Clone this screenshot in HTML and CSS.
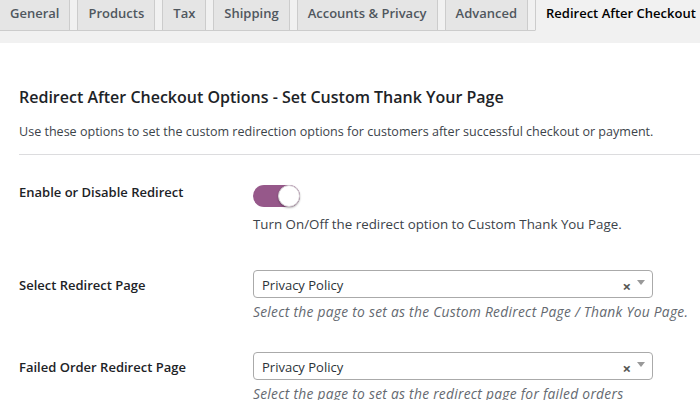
FILE: index.html
```html
<!DOCTYPE html>
<html lang="en">
<head>
<meta charset="utf-8">
<title>Redirect After Checkout</title>
<link rel="stylesheet" href="styles.css">
</head>
<body>
<div class="top">
  <nav class="tabs">
    <a class="tab">General</a>
    <a class="tab">Products</a>
    <a class="tab">Tax</a>
    <a class="tab">Shipping</a>
    <a class="tab">Accounts &amp; Privacy</a>
    <a class="tab">Advanced</a>
    <a class="tab active">Redirect After Checkout</a>
  </nav>
</div>
<main class="content">
  <h2 class="title">Redirect After Checkout Options - Set Custom Thank Your Page</h2>
  <p class="intro">Use these options to set the custom redirection options for customers after successful checkout or payment.</p>
  <hr class="sep">
  <div class="row row-toggle">
    <div class="label">Enable or Disable Redirect</div>
    <div class="field">
      <span class="toggle"><span class="knob"></span></span>
      <p class="plain-desc">Turn On/Off the redirect option to Custom Thank You Page.</p>
    </div>
  </div>
  <div class="row row-select">
    <div class="label">Select Redirect Page</div>
    <div class="field">
      <div class="select"><span class="value">Privacy Policy</span><span class="clear">×</span><span class="arrow"></span></div>
      <p class="desc">Select the page to set as the Custom Redirect Page / Thank You Page.</p>
    </div>
  </div>
  <div class="row row-select row-last">
    <div class="label">Failed Order Redirect Page</div>
    <div class="field">
      <div class="select"><span class="value">Privacy Policy</span><span class="clear">×</span><span class="arrow"></span></div>
      <p class="desc">Select the page to set as the redirect page for failed orders</p>
    </div>
  </div>
</main>
</body>
</html>
```
FILE: styles.css
```css
* { box-sizing: border-box; }
html, body { margin: 0; padding: 0; }
body {
  background: #fff;
  font-family: "Open Sans", "Noto Sans", sans-serif;
  color: #3c434a;
  width: 700px;
  height: 400px;
  overflow: hidden;
}
.top {
  background: #f1f1f1;
  height: 43px;
}
.tabs {
  display: flex;
  gap: 7px;
  height: 31px;
  border-bottom: 1px solid #cccccc;
  white-space: nowrap;
}
.tab {
  display: block;
  height: 31px;
  padding: 1px 10px 0;
  margin-bottom: -1px;
  background: #e5e5e5;
  border: 1px solid #cccccc;
  border-top: none;
  color: #50575e;
  font-size: 13px;
  font-weight: 600;
  line-height: 24px;
}
.tab:first-child { margin-left: -1px; }
.tab.active {
  background: #f1f1f1;
  border-bottom-color: #f1f1f1;
  color: #000;
}
.content {
  padding-left: 19px;
}
.title {
  margin: 43px 0 0;
  font-size: 16px;
  line-height: 22px;
  font-weight: 600;
  color: #1d2327;
}
.intro {
  margin: 15px 0 0;
  font-size: 12.55px;
  line-height: 18px;
}
.sep {
  margin: 13px 0 0;
  border: 0;
  border-top: 1px solid #dcdcde;
  height: 0;
}
.row {
  display: grid;
  grid-template-columns: 234px 1fr;
}
.row-toggle { margin-top: 28px; }
.row-select { margin-top: 37px; }
.row-last { margin-top: 31px; }
.label {
  font-size: 13px;
  line-height: 18px;
  font-weight: 600;
  color: #1d2327;
}
.row-select .label { padding-top: 6px; }
.row-toggle .field { padding-top: 2px; }
.toggle {
  display: block;
  position: relative;
  width: 47px;
  height: 22px;
  border-radius: 11px;
  background: #96588a;
}
.knob {
  position: absolute;
  top: 0;
  right: 0;
  width: 22px;
  height: 22px;
  border-radius: 50%;
  background: #fff;
  border: 1px solid #d6d0d5;
  box-shadow: 0 1px 2px rgba(0,0,0,0.3);
}
.plain-desc {
  margin: 8px 0 0;
  font-size: 13.33px;
  line-height: 18px;
  color: #3c434a;
}
.select {
  display: flex;
  align-items: center;
  width: 400px;
  height: 28px;
  border: 1px solid #aaaaaa;
  border-radius: 4px;
  padding: 0 8px;
  background: #fff;
}
.value {
  flex: 1;
  font-size: 13px;
  color: #2c3338;
  line-height: 26px;
  padding-top: 2px;
}
.clear {
  font-size: 15px;
  font-weight: 700;
  color: #555;
  line-height: 26px;
  margin-right: 6px;
  margin-top: 4px;
}
.arrow {
  width: 0;
  height: 0;
  border-left: 4px solid transparent;
  border-right: 4px solid transparent;
  border-top: 5px solid #999;
  margin-top: -3px;
  margin-right: -1px;
}
.desc {
  margin: 5px 0 0;
  font-size: 13.8px;
  letter-spacing: 0.27px;
  line-height: 18px;
  font-style: italic;
  color: #646970;
  white-space: nowrap;
}
```
